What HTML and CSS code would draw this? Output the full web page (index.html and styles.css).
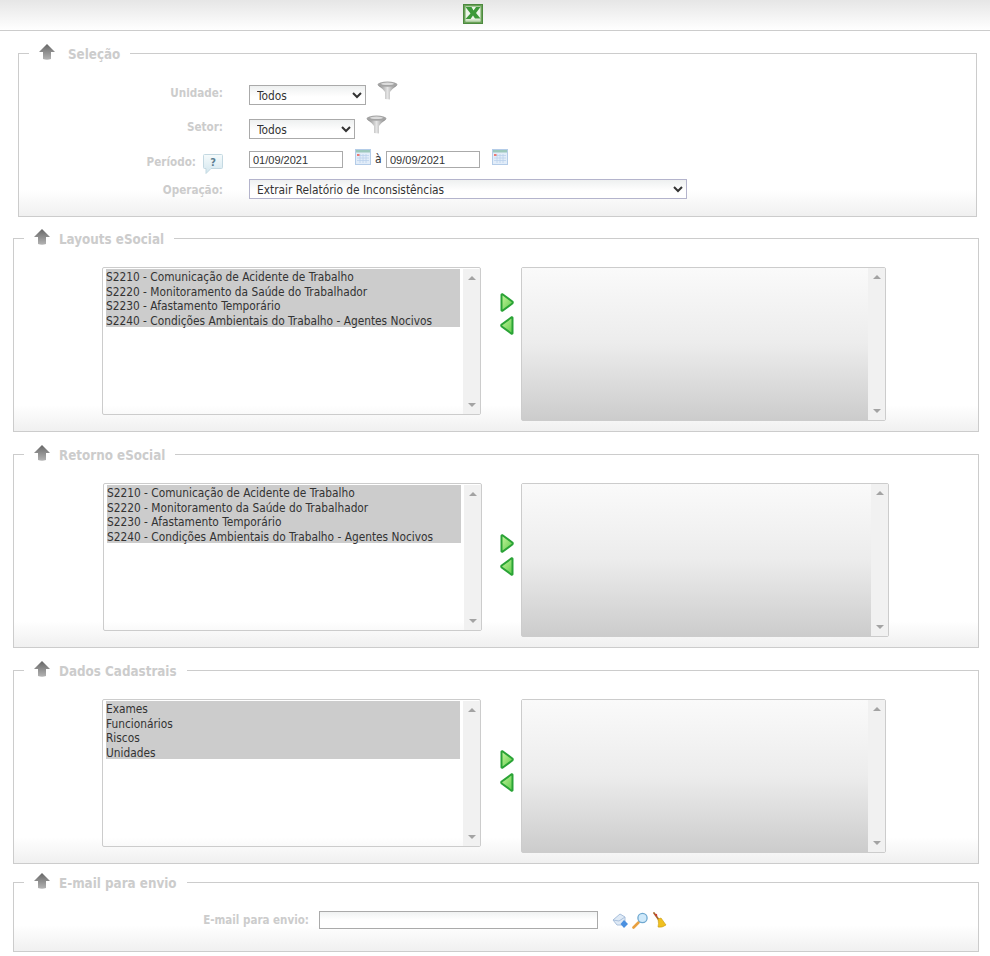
FILE: index.html
```html
<!DOCTYPE html>
<html lang="pt-BR">
<head>
<meta charset="utf-8">
<title>Relatório eSocial</title>
<link rel="stylesheet" href="styles.css">
</head>
<body>
<svg class="defs" width="0" height="0" aria-hidden="true">
  <defs>
    <linearGradient id="gUp" x1="0" y1="0" x2="0" y2="1"><stop offset="0" stop-color="#666"/><stop offset="1" stop-color="#b4b4b4"/></linearGradient>
    <linearGradient id="gGreen" x1="0" y1="0" x2="1" y2="1"><stop offset="0" stop-color="#c8f59e"/><stop offset="1" stop-color="#5ccb4a"/></linearGradient>
    <linearGradient id="gFunnel" x1="0" y1="0" x2="1" y2="0"><stop offset="0" stop-color="#7d7d7d"/><stop offset=".5" stop-color="#e4e4e4"/><stop offset="1" stop-color="#7d7d7d"/></linearGradient>
    <linearGradient id="gBubble" x1="0" y1="0" x2="0" y2="1"><stop offset="0" stop-color="#f6fbfc"/><stop offset="1" stop-color="#d2e6ee"/></linearGradient>
    <symbol id="i-up" viewBox="0 0 16 16"><path d="M8 0 16 8H12V15Q8 16.500 4 15V8H0Z" fill="url(#gUp)"/></symbol>
    <symbol id="i-funnel" viewBox="0 0 21 19"><ellipse cx="10.500" cy="3.500" rx="10" ry="3" fill="#a4a4a4"/><path d="M1 4.500Q5.500 7.500 8 11V18L13 18.500V11Q15.500 7.500 20 4.500Q10.500 7 1 4.500Z" fill="url(#gFunnel)"/><ellipse cx="10.500" cy="2.800" rx="6.500" ry="1.300" fill="#dcdcdc"/></symbol>
    <symbol id="i-cal" viewBox="0 0 16 16"><rect x=".5" y=".5" width="15" height="15" fill="#e2edf9" stroke="#b4cce8"/><rect x="1" y="1" width="14" height="2.500" fill="#9cc8bc"/><path d="M2 6.500H14M2 9H14M2 11.500H14M5 5V14M8 5V14M11 5V14" stroke="#bcd2ec" stroke-width=".8"/><rect x="2" y="5" width="2.500" height="2" fill="#ec7a74"/></symbol>
    <symbol id="i-right" viewBox="0 0 14 19"><path d="M1.500 1.800Q1.500 1 2.500 1.300L12.300 8.500Q13.200 9.500 12.300 10.500L2.500 17.700Q1.500 18 1.500 17.200Z" fill="url(#gGreen)" stroke="#2aa336" stroke-width="2" stroke-linejoin="round"/></symbol>
    <symbol id="i-left" viewBox="0 0 14 19"><path d="M12.500 1.800Q12.500 1 11.500 1.300L1.700 8.500Q.8 9.500 1.700 10.500L11.500 17.700Q12.500 18 12.500 17.200Z" fill="url(#gGreen)" stroke="#2aa336" stroke-width="2" stroke-linejoin="round"/></symbol>
  </defs>
</svg>

<header class="topbar">
  <svg class="excel" viewBox="0 0 20 20" role="img" aria-label="Excel">
    <rect x=".5" y=".5" width="19" height="19" fill="#6ba258" stroke="#4c8a3f"/>
    <rect x="2.500" y="2.500" width="15" height="15" fill="#eef5ea"/>
    <path d="M2.500 3H8.500L10.500 6.500L13 3H17.500L13 9L17.500 14.500H12L10 11.500L7.500 15H2.500L7.500 9.500Z" fill="#3d9a3a"/>
    <rect x="3" y="15.500" width="14" height="1.500" fill="#c8dfbd"/>
  </svg>
</header>

<main>
  <fieldset class="panel panel--selecao">
    <legend class="panel-title panel-title--wide"><svg class="up"><use href="#i-up"/></svg>Seleção</legend>
    <div class="form">
      <div class="row row--unidade">
        <label class="label">Unidade:</label>
        <select class="select select--unidade"><option>Todos</option></select>
        <svg class="funnel"><use href="#i-funnel"/></svg>
      </div>
      <div class="row row--setor">
        <label class="label">Setor:</label>
        <select class="select select--setor"><option>Todos</option></select>
        <svg class="funnel"><use href="#i-funnel"/></svg>
      </div>
      <div class="row row--periodo">
        <label class="label label--help">Período:
          <svg class="help" viewBox="0 0 20 20"><path d="M1.500.5H18.500Q19.500.5 19.500 1.500V13.500Q19.500 14.500 18.500 14.500H8L3 19.500V14.500H1.500Q.5 14.500.5 13.500V1.500Q.5.5 1.500.5Z" fill="url(#gBubble)" stroke="#c4d9e2"/><text x="10" y="12" text-anchor="middle" class="help-q">?</text></svg>
        </label>
        <input class="date" type="text" value="01/09/2021">
        <svg class="cal"><use href="#i-cal"/></svg>
        <span class="a">à</span>
        <input class="date" type="text" value="09/09/2021">
        <svg class="cal"><use href="#i-cal"/></svg>
      </div>
      <div class="row row--operacao">
        <label class="label label--op">Operação:</label>
        <select class="select select--operacao"><option>Extrair Relatório de Inconsistências</option></select>
      </div>
    </div>
  </fieldset>

  <fieldset class="panel panel--list panel--layouts">
    <legend class="panel-title"><svg class="up"><use href="#i-up"/></svg>Layouts eSocial</legend>
    <div class="dual">
      <div class="listbox listbox--from">
        <ul class="options">
          <li>S2210 - Comunicação de Acidente de Trabalho</li>
          <li>S2220 - Monitoramento da Saúde do Trabalhador</li>
          <li>S2230 - Afastamento Temporário</li>
          <li>S2240 - Condições Ambientais do Trabalho - Agentes Nocivos</li>
        </ul>
        <div class="scroll"><i class="tri tri--up"></i><i class="tri tri--down"></i></div>
      </div>
      <div class="moves moves--high">
        <svg class="move"><use href="#i-right"/></svg>
        <svg class="move"><use href="#i-left"/></svg>
      </div>
      <div class="listbox listbox--to">
        <div class="options options--empty"></div>
        <div class="scroll"><i class="tri tri--up"></i><i class="tri tri--down"></i></div>
      </div>
    </div>
  </fieldset>

  <fieldset class="panel panel--list panel--retorno">
    <legend class="panel-title"><svg class="up"><use href="#i-up"/></svg>Retorno eSocial</legend>
    <div class="dual dual--shift">
      <div class="listbox listbox--from">
        <ul class="options">
          <li>S2210 - Comunicação de Acidente de Trabalho</li>
          <li>S2220 - Monitoramento da Saúde do Trabalhador</li>
          <li>S2230 - Afastamento Temporário</li>
          <li>S2240 - Condições Ambientais do Trabalho - Agentes Nocivos</li>
        </ul>
        <div class="scroll"><i class="tri tri--up"></i><i class="tri tri--down"></i></div>
      </div>
      <div class="moves moves--shift">
        <svg class="move"><use href="#i-right"/></svg>
        <svg class="move"><use href="#i-left"/></svg>
      </div>
      <div class="listbox listbox--to listbox--wide">
        <div class="options options--empty"></div>
        <div class="scroll"><i class="tri tri--up"></i><i class="tri tri--down"></i></div>
      </div>
    </div>
  </fieldset>

  <fieldset class="panel panel--list panel--dados">
    <legend class="panel-title"><svg class="up"><use href="#i-up"/></svg>Dados Cadastrais</legend>
    <div class="dual">
      <div class="listbox listbox--from">
        <ul class="options">
          <li>Exames</li>
          <li>Funcionários</li>
          <li>Riscos</li>
          <li>Unidades</li>
        </ul>
        <div class="scroll"><i class="tri tri--up"></i><i class="tri tri--down"></i></div>
      </div>
      <div class="moves">
        <svg class="move"><use href="#i-right"/></svg>
        <svg class="move"><use href="#i-left"/></svg>
      </div>
      <div class="listbox listbox--to">
        <div class="options options--empty"></div>
        <div class="scroll"><i class="tri tri--up"></i><i class="tri tri--down"></i></div>
      </div>
    </div>
  </fieldset>

  <fieldset class="panel panel--email">
    <legend class="panel-title"><svg class="up"><use href="#i-up"/></svg>E-mail para envio</legend>
    <div class="email-row">
      <label class="email-label">E-mail para envio:</label>
      <input class="email-input" type="text">
      <svg class="tool tool--mail" viewBox="0 0 17 17">
        <path d="M1 8 8 2 13 5 13 13 5 13Z" fill="#dfeaf6" stroke="#a9c0dc"/>
        <path d="M1 8 7 9 13 5" fill="none" stroke="#a9c0dc"/>
        <path d="M12 8 16 12 12 16 8.500 12Z" fill="#4a90e0"/>
      </svg>
      <svg class="tool tool--find" viewBox="0 0 17 17">
        <path d="M6.500 10.500 1.500 15.500" stroke="#e8a040" stroke-width="2.600" stroke-linecap="round"/>
        <circle cx="10.500" cy="6" r="4.600" fill="#cfe9fa" stroke="#6fa8d0" stroke-width="1.300"/>
      </svg>
      <svg class="tool tool--broom" viewBox="0 0 17 17">
        <path d="M2 1 7 8" stroke="#a8662a" stroke-width="1.800" stroke-linecap="round"/>
        <path d="M3.500 3.500 5 2.500" stroke="#d03030" stroke-width="1.800"/>
        <path d="M6 7 9 6 14 13Q10 16 6 15Q7 12 6 7Z" fill="#f0c020" stroke="#c89a10" stroke-width=".6"/>
      </svg>
    </div>
  </fieldset>
</main>
</body>
</html>
```

FILE: styles.css
```css
* { box-sizing: border-box; }

html, body { margin: 0; padding: 0; }

body {
  background: #fff;
  font-family: "DejaVu Sans", "Noto Sans", sans-serif;
  font-stretch: condensed;
  font-size: 11.800px;
  color: #333;
  height: 956px;
  overflow: hidden;
}

.defs { display: block; height: 0; }

.topbar {
  height: 31px;
  border-bottom: 1px solid #ccc;
  background: linear-gradient(#e6e6e6, #fff);
  padding: 4px 0 0 463px;
}

.excel { width: 20px; height: 20px; display: block; }

.panel {
  display: block;
  min-width: 0;
  margin: 0 0 12px 13px;
  padding: 0;
  width: 966px;
  height: 204px;
  border: 1px solid #ccc;
  background: linear-gradient(#fff, #f0f0f0) left bottom / 100% 26px no-repeat;
}

.panel--selecao { margin: 12px 0 11px 18px; width: 959px; height: 174px; }
.panel--dados { margin-bottom: 8px; }
.panel--email { height: 80px; margin-bottom: 0; }

.panel-title {
  margin-left: 10px;
  padding: 2px 10px 0;
  height: 20px;
  display: flex;
  align-items: center;
  font-size: 13.300px;
  font-weight: 700;
  color: #ccc;
  white-space: nowrap;
}

.panel-title--wide .up { margin-right: 13px; }

.up { width: 16px; height: 16px; margin-right: 9px; margin-top: -4px; flex: none; }

.form { padding-top: 22px; }

.row { display: flex; align-items: flex-start; }
.row--unidade { height: 34px; }
.row--setor { height: 32px; }
.row--periodo { height: 28px; }
.row--operacao { height: 20px; }

.label {
  width: 230px;
  padding-right: 26px;
  text-align: right;
  font-weight: 700;
  font-size: 11.600px;
  color: #ccc;
  line-height: 16px;
  flex: none;
}

.label--help { position: relative; padding-right: 53px; line-height: 18px; padding-top: 2px; }
.label--op { padding-top: 3px; }

.help { position: absolute; left: 184px; top: 3px; width: 20px; height: 20px; }
.help-q { font-size: 11px; font-weight: 700; fill: #5d7f92; }

.select {
  height: 20px;
  border: 1px solid #aaa;
  border-radius: 0;
  background: linear-gradient(#eef0f0, #fff 60%);
  font: inherit;
  color: #333;
  padding: 1px 0 0 3px;
  flex: none;
}

.select--unidade { width: 117px; }
.select--setor { width: 106px; }
.select--operacao { width: 438px; border-color: #b4b4cc; }

.funnel { width: 21px; height: 19px; flex: none; margin: -4px 0 0 11px; }

.date {
  width: 94px;
  height: 17px;
  border: 1px solid #aaa;
  border-radius: 0;
  padding: 1px 3px 0;
  font-family: "Liberation Sans", sans-serif;
  font-size: 11px;
  color: #333;
  flex: none;
  outline: none;
}

.cal { width: 16px; height: 16px; margin: -2px 0 0 12px; flex: none; }

.a { width: 15px; padding-left: 4px; font-size: 12px; color: #333; flex: none; line-height: 16px; }

.dual { display: flex; align-items: flex-start; padding: 19px 0 0 88px; }
.dual--shift { padding-left: 89px; }

.listbox {
  display: flex;
  border: 1px solid #ccc;
  border-radius: 2px;
  flex: none;
}

.listbox--from { width: 379px; height: 148px; padding: 1px 0 0 3px; }
.listbox--to { width: 365px; height: 154px; }
.listbox--wide { width: 368px; }

.options {
  flex: 1;
  margin: 0;
  padding: 0;
  list-style: none;
  align-self: stretch;
}

.options li {
  width: 354px;
  height: 14.500px;
  background: #ccc;
  color: #333;
  line-height: 16px;
  white-space: nowrap;
}

.options--empty { background: linear-gradient(#fafafa, #ececec 50%, #ccc); }

.scroll {
  width: 17px;
  flex: none;
  background: #f1f1f1;
  display: flex;
  flex-direction: column;
  justify-content: space-between;
  align-items: center;
  padding: 7px 0;
}

.tri { display: block; width: 0; height: 0; border-left: 4px solid transparent; border-right: 4px solid transparent; }
.tri--up { border-bottom: 4px solid #a3a3a3; }
.tri--down { border-top: 4px solid #a3a3a3; }

.moves {
  width: 40px;
  flex: none;
  display: flex;
  flex-direction: column;
  gap: 4px;
  padding: 51px 0 0 19px;
}

.moves--high { padding-top: 26px; }
.moves--shift { width: 39px; padding-left: 18px; }

.move { width: 14px; height: 19px; display: block; }

.email-row { display: flex; align-items: center; height: 18px; margin-top: 19px; padding-left: 188px; }

.email-label { width: 107px; text-align: right; font-weight: 700; font-size: 11.500px; color: #ccc; flex: none; white-space: nowrap; }

.email-input {
  width: 279px;
  height: 18px;
  margin-left: 10px;
  border: 1px solid #aaa;
  border-radius: 0;
  background: linear-gradient(#f0f2f2, #fff 50%);
  padding: 0 3px;
  flex: none;
  outline: none;
}

.tool { width: 17px; height: 17px; flex: none; }
.tool--mail { margin-left: 14px; }
.tool--find { margin-left: 3px; }
.tool--broom { margin-left: 3px; }
```
